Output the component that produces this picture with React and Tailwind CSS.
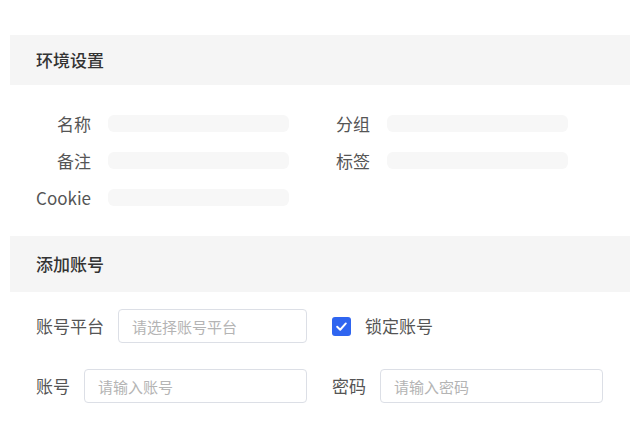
import React from 'react';

const font = { fontFamily: '"Noto Sans CJK SC", "Noto Sans", sans-serif' };

const InfoRow = ({ label }) => (
  <div className="flex items-center h-[37px]">
    <span className="w-[56px] text-right text-[17px] text-[#555]">{label}</span>
    <div className="ml-[17px] w-[181px] h-[17px] rounded-md bg-[#f7f7f7]" />
  </div>
);

const Field = ({ label, placeholder }) => (
  <div className="flex items-center gap-[14px] w-[271px]">
    <span className="text-[17px] text-[#555] whitespace-nowrap">{label}</span>
    <input
      className="flex-1 min-w-0 h-[34px] border border-[#dcdfe6] rounded-[4px] px-[13px] text-[15px] text-[#333] placeholder:text-[#b4b4b4] outline-none bg-white"
      placeholder={placeholder}
    />
  </div>
);

const EnvPanel = () => {
  return (
    <div className="w-[640px] h-[438px] bg-white pt-[35px] px-[10px]" style={font}>
      <div className="h-[50px] bg-[#f5f5f5] flex items-center px-[26px]">
        <h2 className="text-[17px] font-medium text-[#333]">环境设置</h2>
      </div>

      <div className="grid grid-cols-[279px_279px] pl-[25px] pt-[20px] pb-[20px]">
        <InfoRow label="名称" />
        <InfoRow label="分组" />
        <InfoRow label="备注" />
        <InfoRow label="标签" />
        <InfoRow label="Cookie" />
      </div>

      <div className="h-[56px] bg-[#f5f5f5] flex items-center px-[26px]">
        <h2 className="text-[17px] font-medium text-[#333]">添加账号</h2>
      </div>

      <div className="pl-[26px] pt-[17px] flex flex-col gap-[26px]">
        <div className="flex gap-[25px]">
          <Field label="账号平台" placeholder="请选择账号平台" />
          <label className="flex items-center gap-[14px]">
            <span className="w-[19px] h-[19px] rounded-[3px] bg-[#2f65f0] flex items-center justify-center">
              <svg width="13" height="13" viewBox="0 0 12 12" fill="none">
                <path d="M2 6.2 L4.8 9 L10 3.2" stroke="white" strokeWidth="1.8" strokeLinecap="round" strokeLinejoin="round" />
              </svg>
            </span>
            <span className="text-[17px] text-[#555]">锁定账号</span>
          </label>
        </div>
        <div className="flex gap-[25px]">
          <Field label="账号" placeholder="请输入账号" />
          <Field label="密码" placeholder="请输入密码" />
        </div>
      </div>
    </div>
  );
};

export default function App() {
  return <EnvPanel />;
}
